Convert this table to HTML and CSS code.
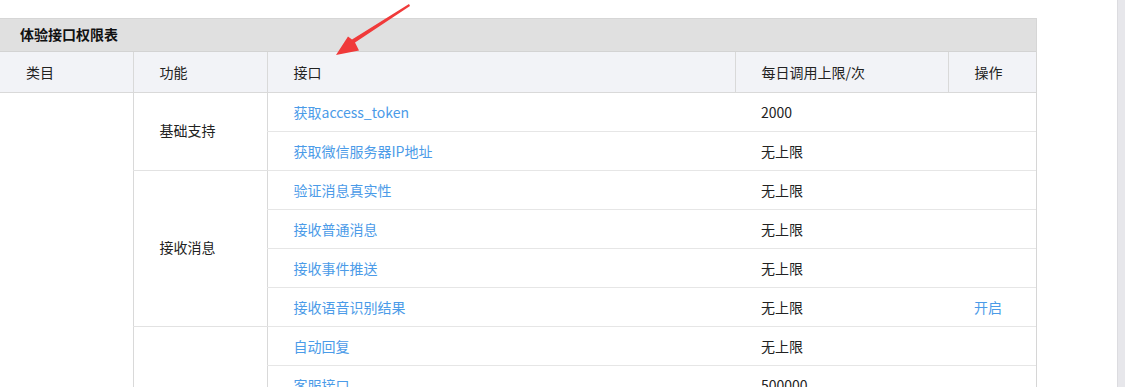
FILE: index.html
```html
<!DOCTYPE html>
<html lang="zh-CN">
<head>
<meta charset="utf-8">
<title>体验接口权限表</title>
<link rel="stylesheet" href="styles.css">
</head>
<body>
<div class="main">
  <div class="panel">
    <div class="panel-title">体验接口权限表</div>
    <table class="perm">
      <colgroup>
        <col class="c-cat"><col class="c-func"><col class="c-api"><col class="c-limit"><col class="c-op">
      </colgroup>
      <thead>
        <tr><th>类目</th><th>功能</th><th>接口</th><th>每日调用上限/次</th><th>操作</th></tr>
      </thead>
      <tbody>
        <tr>
          <td class="cat" rowspan="10"></td>
          <td class="func" rowspan="2">基础支持</td>
          <td class="api"><a class="link" href="#">获取access_token</a></td><td>2000</td><td></td>
        </tr>
        <tr><td class="api"><a class="link" href="#">获取微信服务器IP地址</a></td><td>无上限</td><td></td></tr>
        <tr>
          <td class="func" rowspan="4">接收消息</td>
          <td class="api"><a class="link" href="#">验证消息真实性</a></td><td>无上限</td><td></td>
        </tr>
        <tr><td class="api"><a class="link" href="#">接收普通消息</a></td><td>无上限</td><td></td></tr>
        <tr><td class="api"><a class="link" href="#">接收事件推送</a></td><td>无上限</td><td></td></tr>
        <tr><td class="api"><a class="link" href="#">接收语音识别结果</a></td><td>无上限</td><td><a class="link" href="#">开启</a></td></tr>
        <tr>
          <td class="func" rowspan="4">发送消息</td>
          <td class="api"><a class="link" href="#">自动回复</a></td><td>无上限</td><td></td>
        </tr>
        <tr><td class="api"><a class="link" href="#">客服接口</a></td><td>500000</td><td></td></tr>
        <tr><td class="api"><a class="link" href="#">群发接口</a></td><td>详情</td><td></td></tr>
        <tr><td class="api"><a class="link" href="#">模板消息接口</a></td><td>100000</td><td></td></tr>
      </tbody>
    </table>
  </div>
  <svg class="arrow" width="90" height="64" viewBox="0 0 90 64" aria-hidden="true">
    <polygon points="89,4 90,6 35,42.5 39,50.5 16,55 28,36.5 32,39.5" fill="#f03a3a"/>
  </svg>
</div>
<div class="scrollbar"></div>
</body>
</html>
```

FILE: styles.css
```css
html, body {
  margin: 0;
  padding: 0;
  height: 100%;
  background: #fff;
}
body {
  display: flex;
  overflow: hidden;
  font-family: "Noto Sans CJK SC", "Microsoft YaHei", sans-serif;
  font-size: 14px;
  color: #222;
}
.main {
  flex: 1;
  position: relative;
  padding-top: 18px;
}
.scrollbar {
  width: 7px;
  flex: none;
  background: #e7e7eb;
  border-left: 1px solid #dcdce0;
}
.panel {
  width: 1036px;
  border-top: 1px solid #d6d6d6;
  border-right: 1px solid #d6d6d6;
}
.panel-title {
  height: 32px;
  line-height: 31px;
  background: #e0e0e0;
  padding-left: 20px;
  font-weight: bold;
  font-size: 14px;
  color: #111;
}
.perm {
  width: 1036px;
  table-layout: fixed;
  border-collapse: collapse;
}
.c-cat { width: 133px; }
.c-func { width: 134px; }
.c-api { width: 468px; }
.c-limit { width: 213px; }
.c-op { width: 88px; }
.perm th {
  height: 40px;
  padding: 0 0 0 26px;
  background: #f2f3f7;
  font-weight: normal;
  text-align: left;
  color: #222;
  border-top: 1px solid #d3d3d3;
  border-bottom: 1px solid #d9d9d9;
  border-left: 1px solid #d9d9d9;
}
.perm th:first-child { border-left: none; }
.perm td {
  height: 38px;
  padding: 0 0 0 26px;
  border-bottom: 1px solid #e6e6e6;
  vertical-align: middle;
}
.perm td.cat { border-bottom: none; }
.perm td.func {
  border-left: 1px solid #d9d9d9;
  border-bottom: 1px solid #e2e2e2;
  padding-bottom: 3px;
}
.perm td.api { border-left: 1px solid #d9d9d9; }
.link {
  color: #4b9be8;
  text-decoration: none;
}
.arrow {
  position: absolute;
  left: 320px;
  top: 0;
}
```
